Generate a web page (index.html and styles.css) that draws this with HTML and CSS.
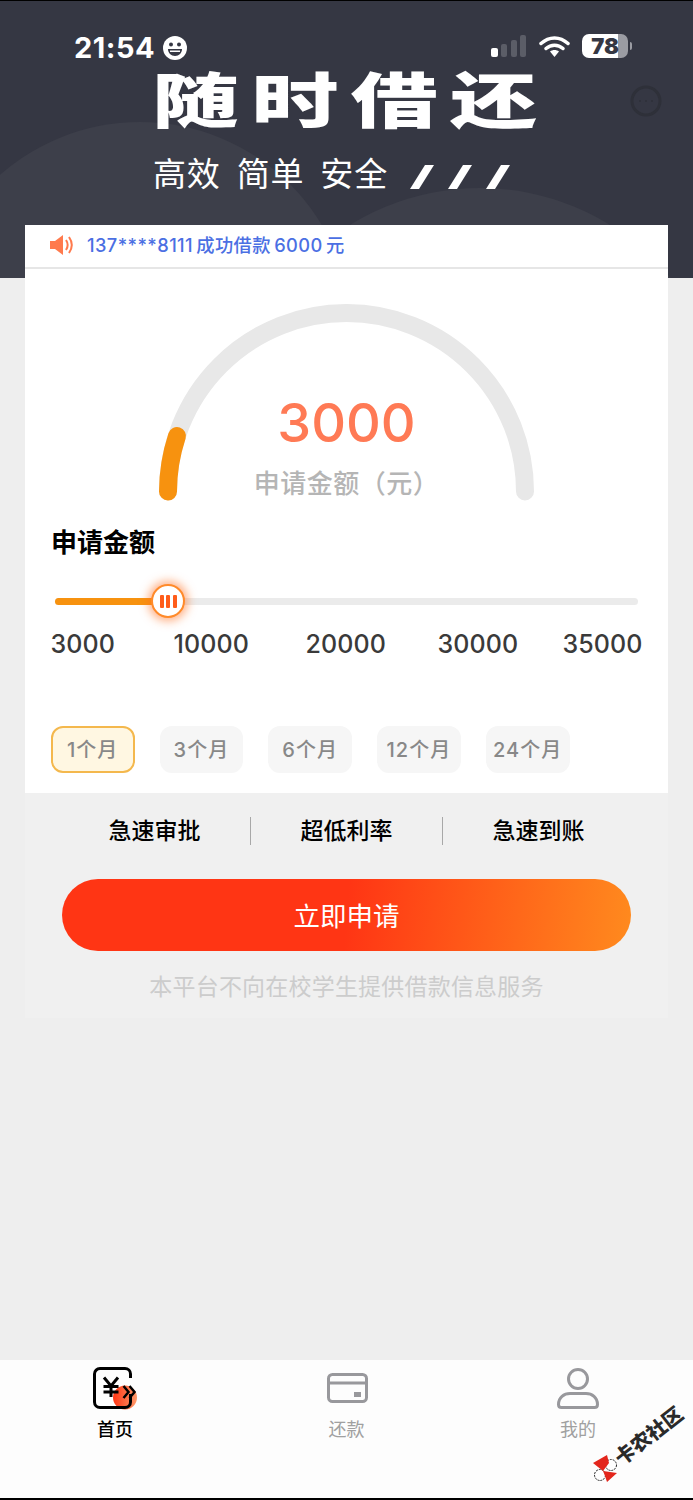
FILE: index.html
```html
<!doctype html>
<html lang="zh-CN">
<head>
    <meta charset="UTF-8">
    <meta name="viewport" content="width=device-width, initial-scale=1.0">
    <title>随时借还</title>
    <link rel="stylesheet" href="styles.css">
</head>
<body>
<div class="page">
    <header class="hero">
        <span class="blob blob-left"></span>
        <span class="blob blob-right"></span>

        <div class="status">
            <div class="status-time">
                <span>21:54</span>
                <svg width="24" height="24" viewBox="0 0 24 24">
                    <circle cx="12" cy="12" r="12" fill="#fff"></circle>
                    <circle cx="8" cy="8.500" r="2" fill="#353743"></circle>
                    <circle cx="16" cy="8.500" r="2" fill="#353743"></circle>
                    <path d="M5 13h14c0 4-3 7-7 7s-7-3-7-7z" fill="#353743"></path>
                    <path d="M7 14.500h10v1.500H7z" fill="#fff"></path>
                </svg>
            </div>
            <div class="status-right">
                <svg width="36" height="22" viewBox="0 0 36 22">
                    <rect x="0" y="13" width="7" height="9" rx="2" fill="#fff"></rect>
                    <rect x="10" y="9" width="6" height="13" rx="2" fill="#5b5d67"></rect>
                    <rect x="20" y="5" width="6" height="17" rx="2" fill="#5b5d67"></rect>
                    <rect x="29" y="0" width="6" height="22" rx="2" fill="#5b5d67"></rect>
                </svg>
                <svg width="31" height="21" viewBox="0 0 31 21">
                    <path d="M2 7.500C10 0 21 0 29 7.500" fill="none" stroke="#fff" stroke-width="3.500" stroke-linecap="round"></path>
                    <path d="M7 12.500C12 8 19 8 24 12.500" fill="none" stroke="#fff" stroke-width="3.500" stroke-linecap="round"></path>
                    <path d="M11 15.500C13.500 13.500 17.500 13.500 20 15.500L15.500 21Z" fill="#fff"></path>
                </svg>
                <div class="battery">
                    <span class="battery-body">78</span>
                    <span class="battery-tip"></span>
                </div>
            </div>
        </div>

        <svg class="more" width="34" height="34" viewBox="0 0 34 34">
            <circle cx="17" cy="17" r="14" fill="none" stroke="#2e3039" stroke-width="3"></circle>
            <circle cx="11" cy="17" r="1" fill="#2e3039"></circle>
            <circle cx="17" cy="17" r="1" fill="#2e3039"></circle>
            <circle cx="23" cy="17" r="1" fill="#2e3039"></circle>
        </svg>

        <h1 class="hero-title">随时借还</h1>
        <div class="hero-sub">
            <span>高效 简单 安全</span>
            <svg width="100" height="24" viewBox="0 0 100 24">
                <path d="M15 0h9L9 24H0z" fill="#fff"></path>
                <path d="M53 0h9L47 24h-9z" fill="#fff"></path>
                <path d="M91 0h9L85 24h-9z" fill="#fff"></path>
            </svg>
        </div>
    </header>

    <main class="panel">
        <section class="card">
            <div class="notice">
                <svg width="24" height="20" viewBox="0 0 24 20">
                    <path d="M0 6h5l8-6v20l-8-6H0z" fill="#ff7a4d"></path>
                    <path d="M16 5c2 3 2 7 0 10" fill="none" stroke="#ff7a4d" stroke-width="2"></path>
                    <path d="M19 2c3.500 5 3.500 11 0 16" fill="none" stroke="#ff7a4d" stroke-width="2"></path>
                </svg>
                <span>137****8111 成功借款 6000 元</span>
            </div>

            <div class="gauge">
                <svg width="643" height="232" viewBox="0 0 643 232">
                    <path class="gauge-track" d="M143 222.500A178.500 178.500 0 0 1 500 222.500"></path>
                    <path class="gauge-fill" d="M143 222.500A178.500 178.500 0 0 1 152 167"></path>
                </svg>
                <div class="gauge-text">
                    <div class="gauge-value">3000</div>
                    <div class="gauge-label">申请金额（元）</div>
                </div>
            </div>

            <h2 class="amount-title">申请金额</h2>

            <div class="slider">
                <div class="slider-track">
                    <div class="slider-fill"></div>
                </div>
                <div class="slider-thumb"><i></i><i></i><i></i></div>
            </div>

            <div class="ticks">
                <span>3000</span>
                <span>10000</span>
                <span>20000</span>
                <span>30000</span>
                <span>35000</span>
            </div>

            <div class="terms">
                <div class="term active">1个月</div>
                <div class="term">3个月</div>
                <div class="term">6个月</div>
                <div class="term">12个月</div>
                <div class="term">24个月</div>
            </div>
        </section>

        <section class="below">
            <div class="features">
                <div class="feature">急速审批</div>
                <div class="feature">超低利率</div>
                <div class="feature">急速到账</div>
            </div>
            <button class="apply" type="button">立即申请</button>
            <p class="disclaimer">本平台不向在校学生提供借款信息服务</p>
        </section>
    </main>

    <nav class="tabbar">
        <div class="tab active">
            <svg width="46" height="46" viewBox="0 0 46 46">
                <defs>
                    <linearGradient id="blobGrad" x1="0" y1="0" x2="1" y2="0">
                        <stop offset="0" stop-color="#ff3514"></stop>
                        <stop offset="1" stop-color="#ff9a6a"></stop>
                    </linearGradient>
                </defs>
                <circle cx="33" cy="30.500" r="12" fill="url(#blobGrad)"></circle>
                <path d="M38.500 11V7A5.500 5.500 0 0 0 33 1.500H8A5.500 5.500 0 0 0 2.500 7v28A5.500 5.500 0 0 0 8 40.500h25a5.500 5.500 0 0 0 5.500-5.500v-8" fill="none" stroke="#000" stroke-width="3"></path>
                <path d="M12 10.500l7 8.500l7-8.500M19 19v11M11.500 19.500h15M11.500 25h15" fill="none" stroke="#000" stroke-width="3"></path>
                <path d="M31.500 19l5 6l-5 6M37.500 19l5 6l-5 6" fill="none" stroke="#000" stroke-width="2.500"></path>
            </svg>
            <span>首页</span>
        </div>
        <div class="tab">
            <svg width="46" height="46" viewBox="0 0 46 46">
                <rect x="4.500" y="7.500" width="38" height="27" rx="4" fill="none" stroke="#98989c" stroke-width="3"></rect>
                <path d="M4.500 16h38" stroke="#98989c" stroke-width="3"></path>
                <rect x="30" y="25" width="7" height="5" fill="#98989c"></rect>
            </svg>
            <span>还款</span>
        </div>
        <div class="tab">
            <svg width="46" height="46" viewBox="0 0 46 46">
                <circle cx="23" cy="12" r="9.500" fill="none" stroke="#98989c" stroke-width="3"></circle>
                <path d="M15 26.500h16c6 0 11.500 4 11.500 11c0 2-1 3-3 3H6.500c-2 0-3-1-3-3c0-7 5.500-11 11.500-11z" fill="none" stroke="#98989c" stroke-width="3"></path>
            </svg>
            <span>我的</span>
        </div>
    </nav>

    <svg class="watermark-logo" width="25" height="28" viewBox="0 0 25 28">
        <circle cx="18" cy="10" r="5.500" fill="#fff" stroke="#222" stroke-width="1" stroke-dasharray="2 1"></circle>
        <circle cx="7" cy="20" r="5.500" fill="#fff" stroke="#222" stroke-width="1" stroke-dasharray="2 1"></circle>
        <path d="M0 8L14 0L16 8L10 16z" fill="#e3261c"></path>
        <path d="M10 16L24 18L14 27L12 21z" fill="#e3261c"></path>
    </svg>
    <div class="watermark">卡农社区</div>
</div>
</body>
</html>
```

FILE: styles.css
```css
* {
    box-sizing: border-box;
}

body {
    margin: 0;
    background: #eee;
    font-family: Inter, "Noto Sans CJK SC", sans-serif;
}

.page {
    position: relative;
    display: flex;
    flex-direction: column;
    width: 693px;
    height: 1500px;
    overflow: hidden;
    background: #eee;
}

/* шапка */
.hero {
    position: relative;
    height: 278px;
    padding-top: 32px;
    overflow: hidden;
    border-top: 1px solid #000;
    background: #353743;
    color: #fff;
}

.blob {
    position: absolute;
    border-radius: 50%;
    background: #3d3f4a;
}

.blob-left {
    left: -72px;
    top: 121px;
    width: 424px;
    height: 424px;
}

.blob-right {
    left: 233px;
    top: 187px;
    width: 494px;
    height: 494px;
}

.status {
    position: relative;
    display: flex;
    justify-content: space-between;
    align-items: center;
    height: 28px;
    padding: 0 61px 0 74px;
}

.status-time {
    display: flex;
    align-items: center;
    gap: 8px;
    margin-top: 2px;
    font-size: 29px;
    font-weight: 700;
    letter-spacing: .5px;
    line-height: 28px;
}

.status-right {
    display: flex;
    align-items: center;
    gap: 12px;
    margin-top: -2px;
}

.battery {
    display: flex;
    align-items: center;
    gap: 2px;
}

.battery-body {
    width: 46px;
    height: 24px;
    border-radius: 7px;
    background: linear-gradient(90deg, #fff 78%, #9b9ca3 78%);
    color: #353743;
    font-size: 22px;
    font-weight: 900;
    line-height: 24px;
    text-align: center;
}

.battery-tip {
    width: 2px;
    height: 8px;
    border-radius: 0 2px 2px 0;
    background: #9b9ca3;
}

.more {
    position: absolute;
    left: 629px;
    top: 83px;
}

.hero-title {
    position: relative;
    margin: 8px 0 0;
    font-size: 60px;
    font-weight: 900;
    line-height: 64px;
    letter-spacing: 8.500px;
    text-align: center;
    text-indent: 5.500px;
    white-space: nowrap;
    transform: scaleX(1.45);
    transform-origin: 346px 0;
}

.hero-sub {
    position: relative;
    display: flex;
    align-items: center;
    gap: 22px;
    margin-top: 23px;
    padding-left: 153px;
    font-size: 33px;
    font-weight: 400;
    letter-spacing: .8px;
    word-spacing: 6px;
    line-height: 36px;
}

.hero-sub svg {
    margin-top: 5px;
}

.panel {
    display: flex;
    flex-direction: column;
    position: relative;
    margin: -53px 25px 0;
}

.card {
    background: #fff;
}

.notice {
    display: flex;
    align-items: center;
    gap: 13px;
    height: 44px;
    padding: 0 0 2px 25px;
    border-bottom: 2px solid #e6e6e6;
    color: #4b6fe3;
    font-size: 18.250px;
    font-weight: 500;
    letter-spacing: .4px;
    word-spacing: -2px;
}

.notice span {
    margin-top: -3px;
}

.gauge {
    display: grid;
}

.gauge svg,
.gauge-text {
    grid-area: 1 / 1;
}

.gauge svg {
    display: block;
}

.gauge-track,
.gauge-fill {
    fill: none;
    stroke-width: 18;
    stroke-linecap: round;
}

.gauge-track {
    stroke: #e8e8e8;
}

.gauge-fill {
    stroke: #f7920f;
}

.gauge-text {
    align-self: end;
    text-align: center;
}

.gauge-value {
    color: #ff7a55;
    font-size: 54px;
    font-weight: 500;
    line-height: 60px;
}

.gauge-label {
    margin-top: 14px;
    color: #b5b5b5;
    font-size: 26px;
    font-weight: 500;
    letter-spacing: .5px;
    line-height: 34px;
}

.amount-title {
    margin: 24px 0 0 26px;
    color: #000;
    font-size: 26px;
    font-weight: 700;
    line-height: 36px;
}

.slider {
    position: relative;
    display: flex;
    align-items: center;
    height: 40px;
    margin: 20px 30px 0;
}

.slider-track {
    width: 100%;
    height: 7px;
    border-radius: 4px;
    background: #ebebeb;
}

.slider-fill {
    width: 100px;
    height: 100%;
    border-radius: 4px;
    background: #f7920f;
}

.slider-thumb {
    position: absolute;
    left: 96px;
    top: 3px;
    display: flex;
    justify-content: center;
    align-items: center;
    gap: 2.500px;
    width: 34px;
    height: 34px;
    border: 2px solid #ff8a2a;
    border-radius: 50%;
    background: #fff;
    box-shadow: 0 0 10px 3px rgba(255, 110, 30, .55);
}

.slider-thumb i {
    width: 4px;
    height: 13px;
    border-radius: 1px;
    background: #ff5c1a;
}

.ticks {
    display: grid;
    grid-template-columns: 123px 132px 132px 125px auto;
    margin: 6px 0 0 25.500px;
    color: #3a3a3a;
    font-size: 25px;
    font-weight: 500;
    letter-spacing: .1px;
    line-height: 34px;
}

.terms {
    display: flex;
    gap: 25px;
    margin: 65px 0 0 25.750px;
    padding-bottom: 20px;
}

.term {
    width: 83.750px;
    height: 47px;
    border: 2px solid #f6f6f6;
    border-radius: 12px;
    background: #f6f6f6;
    color: #888;
    font-size: 20px;
    font-weight: 500;
    letter-spacing: 1px;
    line-height: 44px;
    text-align: center;
}

.term.active {
    border-color: #f4b84d;
    background: #fff7e2;
}

.below {
    padding: 24px 37px 15px;
    background: #f0f0f0;
}

.features {
    display: flex;
    margin: 0 -3px;
}

.feature {
    flex: 1;
    height: 28px;
    color: #000;
    font-size: 23px;
    font-weight: 500;
    line-height: 28px;
    text-align: center;
}

.feature + .feature {
    border-left: 1px solid #a8a8a8;
}

.apply {
    display: block;
    width: 569px;
    height: 72px;
    margin-top: 34px;
    padding: 0 0 2px;
    border: 0;
    border-radius: 36px;
    background: linear-gradient(95deg, #ff3514 50%, #ff8a1e 100%);
    color: #fff;
    font-family: inherit;
    font-size: 26.500px;
}

.disclaimer {
    margin: 20px 0 0;
    color: #ccc;
    font-size: 23px;
    letter-spacing: .2px;
    line-height: 32px;
    text-align: center;
}

.tabbar {
    display: flex;
    justify-content: space-between;
    height: 140px;
    margin-top: auto;
    padding: 7px 92px 0;
    border-bottom: 2px solid #000;
    background: #fdfdfd;
}

.tab {
    display: flex;
    flex-direction: column;
    align-items: center;
    gap: 5px;
    color: #a0a0a0;
    font-size: 18px;
    line-height: 24px;
}

.tab svg {
    display: block;
}

.tab.active {
    color: #000;
    font-weight: 500;
}

.watermark-logo {
    position: absolute;
    left: 593px;
    top: 1455px;
}

.watermark {
    position: absolute;
    left: 609px;
    top: 1423px;
    color: #2a2a2a;
    font-size: 20px;
    font-weight: 900;
    line-height: 26px;
    white-space: nowrap;
    transform: rotate(-38deg);
}
```
